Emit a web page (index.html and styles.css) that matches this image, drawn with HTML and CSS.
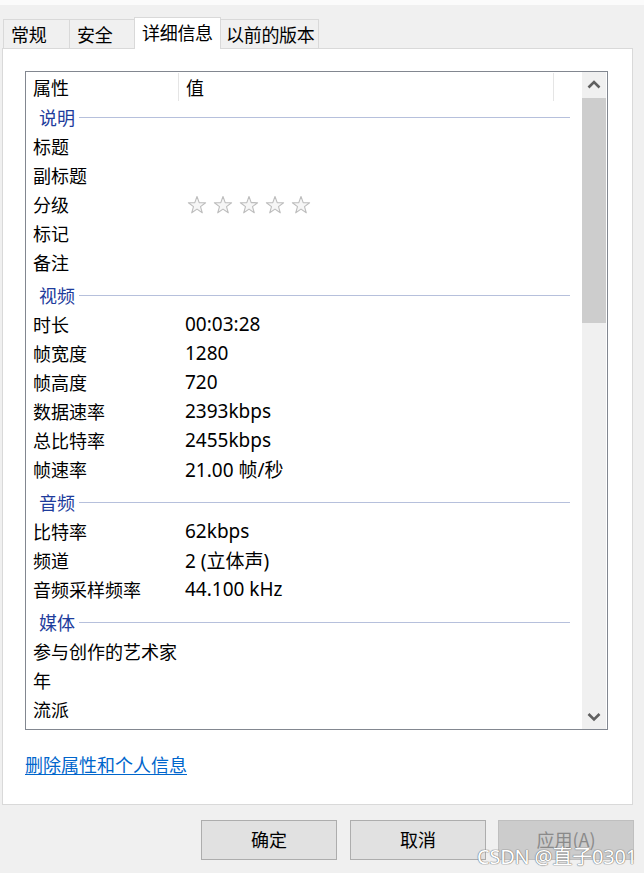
FILE: index.html
```html
<!DOCTYPE html>
<html lang="zh-CN">
<head>
<meta charset="utf-8">
<title>属性</title>
<link rel="stylesheet" href="styles.css">
</head>
<body>
<div class="window">
  <div class="topstrip"></div>
  <div class="tabs">
    <div class="tab t1">常规</div>
    <div class="tab t2">安全</div>
    <div class="tab t3 active">详细信息</div>
    <div class="tab t4">以前的版本</div>
  </div>
  <div class="panel">
    <div class="listbox">
      <div class="list">
        <div class="header">
          <div class="hcell c1">属性</div>
          <div class="hcell c2">值</div>
          <div class="hcell c3"></div>
        </div>
        <div class="group first"><span>说明</span><i></i></div>
        <div class="row"><div class="k">标题</div><div class="v"></div></div>
        <div class="row"><div class="k">副标题</div><div class="v"></div></div>
        <div class="row"><div class="k">分级</div><div class="v stars">
          <svg viewBox="0 0 20 20" class="star"><path d="M10 1.5 L12.2 7.6 L18.6 7.7 L13.5 11.6 L15.3 17.8 L10 14.1 L4.7 17.8 L6.5 11.6 L1.4 7.7 L7.8 7.6 Z"/></svg>
          <svg viewBox="0 0 20 20" class="star"><path d="M10 1.5 L12.2 7.6 L18.6 7.7 L13.5 11.6 L15.3 17.8 L10 14.1 L4.7 17.8 L6.5 11.6 L1.4 7.7 L7.8 7.6 Z"/></svg>
          <svg viewBox="0 0 20 20" class="star"><path d="M10 1.5 L12.2 7.6 L18.6 7.7 L13.5 11.6 L15.3 17.8 L10 14.1 L4.7 17.8 L6.5 11.6 L1.4 7.7 L7.8 7.6 Z"/></svg>
          <svg viewBox="0 0 20 20" class="star"><path d="M10 1.5 L12.2 7.6 L18.6 7.7 L13.5 11.6 L15.3 17.8 L10 14.1 L4.7 17.8 L6.5 11.6 L1.4 7.7 L7.8 7.6 Z"/></svg>
          <svg viewBox="0 0 20 20" class="star"><path d="M10 1.5 L12.2 7.6 L18.6 7.7 L13.5 11.6 L15.3 17.8 L10 14.1 L4.7 17.8 L6.5 11.6 L1.4 7.7 L7.8 7.6 Z"/></svg>
        </div></div>
        <div class="row"><div class="k">标记</div><div class="v"></div></div>
        <div class="row"><div class="k">备注</div><div class="v"></div></div>
        <div class="group"><span>视频</span><i></i></div>
        <div class="row"><div class="k">时长</div><div class="v">00:03:28</div></div>
        <div class="row"><div class="k">帧宽度</div><div class="v">1280</div></div>
        <div class="row"><div class="k">帧高度</div><div class="v">720</div></div>
        <div class="row"><div class="k">数据速率</div><div class="v">2393kbps</div></div>
        <div class="row"><div class="k">总比特率</div><div class="v">2455kbps</div></div>
        <div class="row"><div class="k">帧速率</div><div class="v">21.00 帧/秒</div></div>
        <div class="group"><span>音频</span><i></i></div>
        <div class="row"><div class="k">比特率</div><div class="v">62kbps</div></div>
        <div class="row"><div class="k">频道</div><div class="v">2 (立体声)</div></div>
        <div class="row"><div class="k">音频采样频率</div><div class="v">44.100 kHz</div></div>
        <div class="group"><span>媒体</span><i></i></div>
        <div class="row"><div class="k">参与创作的艺术家</div><div class="v"></div></div>
        <div class="row"><div class="k">年</div><div class="v"></div></div>
        <div class="row"><div class="k">流派</div><div class="v"></div></div>
        <div class="row"><div class="k">&nbsp;</div><div class="v"></div></div>
      </div>
      <div class="scrollbar">
        <div class="sbtn">
          <svg viewBox="0 0 24 26" class="chev"><path d="M6.5 15.5 L12 10 L17.5 15.5" /></svg>
        </div>
        <div class="track">
          <div class="thumb"></div>
        </div>
        <div class="sbtn">
          <svg viewBox="0 0 24 26" class="chev"><path d="M6.5 11 L12 16.5 L17.5 11" /></svg>
        </div>
      </div>
    </div>
    <div class="linkrow"><a class="link" href="#">删除属性和个人信息</a></div>
  </div>
  <div class="buttons">
    <div class="btn">确定</div>
    <div class="btn">取消</div>
    <div class="btn disabled">应用(A)</div>
  </div>
  <div class="watermark">CSDN @直子0301</div>
</div>
</body>
</html>
```

FILE: styles.css
```css
* { box-sizing: border-box; }
html, body {
  margin: 0;
  padding: 0;
  background: #f0f0f0;
}
body {
  font-family: "Segoe UI", "Noto Sans", "Noto Sans CJK SC", sans-serif;
  font-size: 18px;
  color: #000;
  width: 644px;
  height: 873px;
  overflow: hidden;
}
.window {
  position: relative;
  width: 644px;
  height: 873px;
}
.topstrip {
  height: 5px;
  background: #fbfbfb;
}
.tabs {
  display: flex;
  height: 43px;
  padding-left: 3px;
  padding-top: 12px;
  align-items: flex-end;
}
.tab {
  height: 29px;
  border: 1px solid #d9d9d9;
  border-bottom: none;
  border-right: none;
  background: #f0f0f0;
  line-height: 28px;
  padding-left: 7px;
  white-space: nowrap;
  font-family: "Noto Sans CJK SC", sans-serif;
  font-size: 18px;
  letter-spacing: -0.3px;
}
.t1 { width: 66px; }
.t2 { width: 65px; }
.t3 { width: 87px; }
.t4 { width: 98px; border-right: 1px solid #d9d9d9; padding-left: 5px; }
.tab.active {
  height: 32px;
  background: #fff;
  border: 1px solid #d9d9d9;
  border-bottom: none;
  margin-bottom: -1px;
  position: relative;
  z-index: 2;
  line-height: 29px;
}
.tab.active + .tab { border-left: none; }
.panel {
  margin-left: 2px;
  width: 631px;
  height: 757px;
  background: #fff;
  border: 1px solid #d9d9d9;
  padding: 22px 0 0 22px;
  position: relative;
  z-index: 1;
}
.listbox {
  width: 583px;
  height: 659px;
  border: 1px solid #828790;
  display: flex;
  overflow: hidden;
}
.list {
  width: 555px;
  height: 657px;
  overflow: hidden;
}
.header {
  display: flex;
  height: 31px;
}
.hcell {
  padding-left: 7px;
  border-right: 1px solid #e5e5e5;
  margin: 1px 0 2px;
  line-height: 28px;
  font-family: "Noto Sans CJK SC", sans-serif;
}
.c1 { width: 153px; }
.c2 { width: 375px; }
.c3 { flex: 1; border-right: none; }
.group {
  display: flex;
  align-items: center;
  height: 29px;
  margin-top: 4px;
  padding-left: 13px;
  padding-right: 11px;
  padding-bottom: 2px;
  color: #1e3c9c;
  font-family: "Noto Sans CJK SC", sans-serif;
}
.group.first { margin-top: 0; }
.group span { padding-right: 4px; }
.group i {
  flex: 1;
  height: 1px;
  background: #b6c0dc;
  margin-top: 1px;
}
.row {
  display: flex;
  height: 29px;
  align-items: center;
  padding-bottom: 2px;
}
.k {
  width: 159px;
  padding-left: 7px;
  font-family: "Noto Sans CJK SC", sans-serif;
  white-space: nowrap;
}
.v {
  flex: 1;
  white-space: nowrap;
  font-size: 19px;
  font-family: "Segoe UI", "Noto Sans", "Noto Sans CJK SC", sans-serif;
}
.stars {
  display: flex;
  gap: 6px;
  padding-left: 2px;
  padding-top: 3px;
}
.star {
  width: 20px;
  height: 20px;
  fill: #f6f6f6;
  stroke: #bdbdbd;
  stroke-width: 1.1;
  stroke-linejoin: round;
}
.scrollbar {
  width: 24px;
  margin-left: 1px;
  display: flex;
  flex-direction: column;
  background: #f0f0f0;
}
.sbtn {
  height: 26px;
  display: flex;
  align-items: center;
  justify-content: center;
}
.chev {
  width: 24px;
  height: 26px;
  fill: none;
  stroke: #606060;
  stroke-width: 2.6;
}
.track {
  flex: 1;
}
.thumb {
  height: 225px;
  background: #cdcdcd;
}
.linkrow {
  margin-top: 23px;
}
.link {
  color: #0066cc;
  text-decoration: underline;
  text-underline-offset: 2px;
  font-family: "Noto Sans CJK SC", sans-serif;
  font-size: 18px;
  line-height: 22px;
}
.buttons {
  display: flex;
  gap: 13px;
  padding-left: 201px;
  margin-top: 15px;
}
.btn {
  width: 136px;
  height: 40px;
  background: #e1e1e1;
  border: 1px solid #adadad;
  display: flex;
  align-items: center;
  justify-content: center;
  padding-bottom: 2px;
  font-family: "Noto Sans CJK SC", sans-serif;
  font-size: 18px;
}
.btn.disabled {
  background: #cccccc;
  border-color: #bfbfbf;
  color: #8a8a8a;
  width: 136px;
  margin-left: -1px;
}
.watermark {
  position: absolute;
  left: 477px;
  top: 841px;
  font-family: "Noto Sans", "Noto Sans CJK SC", sans-serif;
  font-size: 20px;
  color: #ffffff;
  letter-spacing: -0.2px;
  text-shadow: 0 0 1px #777, 0 0 1px #777, 0 0 1px #888;
  white-space: nowrap;
}
```
